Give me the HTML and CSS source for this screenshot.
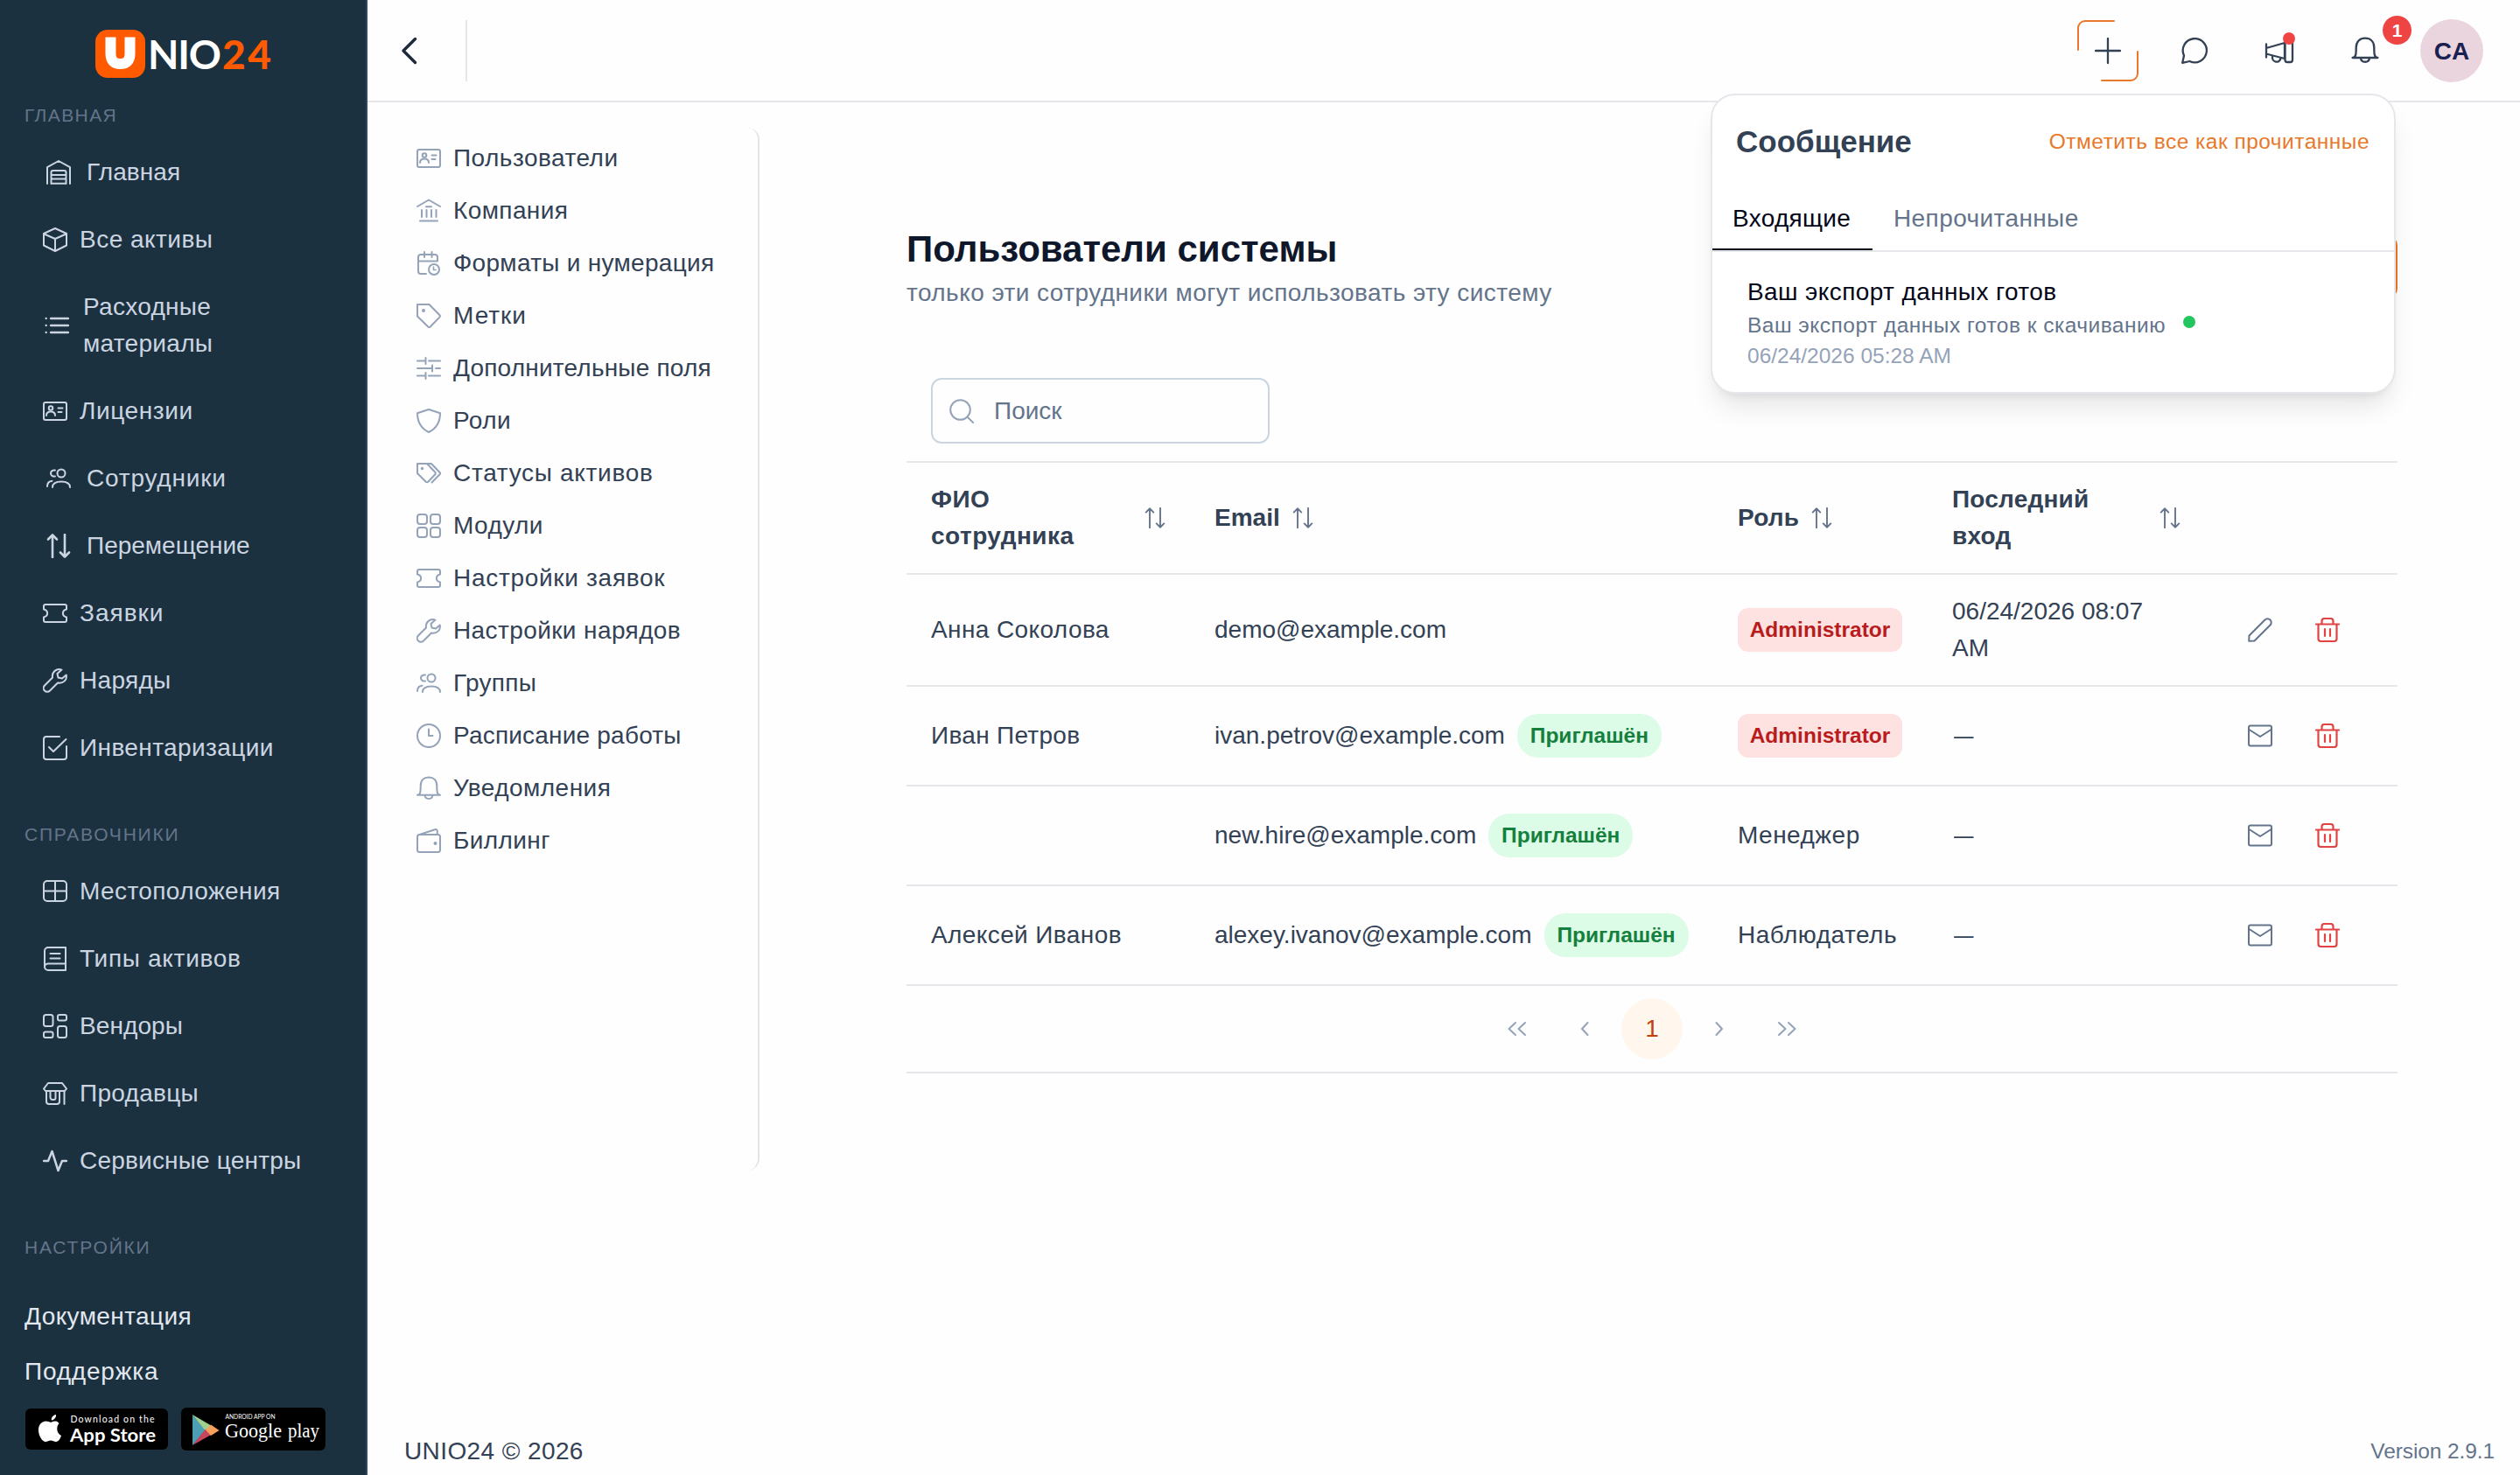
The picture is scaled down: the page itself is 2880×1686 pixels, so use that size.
FILE: index.html
```html
<!DOCTYPE html>
<html lang="ru">
<head>
<meta charset="utf-8">
<title>UNIO24</title>
<link rel="stylesheet" href="styles.css">
</head>
<body>
<svg class="sprite" aria-hidden="true">
  <symbol id="warehouse" viewBox="0 0 28 28"><path d="M1 27V8.200L14 1l13 7.200V27M5.500 27V14a2 2 0 0 1 2-2h13a2 2 0 0 1 2 2v13M5.500 17h17M5.500 21.500h17M6 26.700h16"/></symbol>
  <symbol id="box" viewBox="0 0 28 28"><path d="M14 1 27 7v13.500L14 27 1 20.500V7zM1.500 7.500 14 13l12.500-5.500M14 13v14"/></symbol>
  <symbol id="list" viewBox="0 0 28 28"><path d="M7 6h20M7 14h20M7 22h20M1.600 6h.2M1.600 14h.2M1.600 22h.2" stroke-width="2.300"/></symbol>
  <symbol id="idcard" viewBox="0 0 28 28"><rect x="1" y="4" width="26" height="20" rx="2"/><circle cx="9" cy="10.500" r="2.300"/><path d="M4 19c0-3 2-4.500 5-4.500s5 1.500 5 4.500M17.500 10.500h5M17.500 15h4"/></symbol>
  <symbol id="users" viewBox="0 0 28 28"><circle cx="17" cy="8" r="4.500"/><path d="M7 24c0-4.500 4-6.500 10-6.500s10 2 10 6.500M10 4.500C7.500 4 5 5.500 5 8s2.500 4 5 3.500M1 23c0-4 2-6 5.500-6.300"/></symbol>
  <symbol id="sort" viewBox="0 0 28 28"><path d="M7 27V1.500M2 6.500l5-5 5 5M21 1v25.500M16 21.500l5 5 5-5"/></symbol>
  <symbol id="ticket" viewBox="0 0 28 28"><path d="M3 4h22a2 2 0 0 1 2 2v3.500c-5.500 1.500-5.500 7.500 0 9V22a2 2 0 0 1-2 2H3a2 2 0 0 1-2-2v-3.500c5.500-1.500 5.500-7.500 0-9V6a2 2 0 0 1 2-2z"/></symbol>
  <symbol id="wrench" viewBox="0 0 28 28"><path d="M21.500 1.600c-6-2-11.500 2.400-10.500 8.900L2 19.500a4 4 0 0 0 6 6l9-9c6 1 11-3 9.700-9L22 11.500l-4.500-1L16.500 6z"/></symbol>
  <symbol id="check" viewBox="0 0 28 28"><path d="M19 1H4a3 3 0 0 0-3 3v20a3 3 0 0 0 3 3h20a3 3 0 0 0 3-3V12M7 13l5 5L26.500 4"/></symbol>
  <symbol id="table" viewBox="0 0 28 28"><rect x="1" y="2" width="26" height="23" rx="4"/><path d="M14 2v23M1 13.500h26"/></symbol>
  <symbol id="book" viewBox="0 0 28 28"><path d="M26 1H6a4 4 0 0 0-4 4v18a4 4 0 0 0 4 4h20zM26 19.500H6C4 19.500 2 21 2 23M8.500 8h11M8.500 13.500h11"/></symbol>
  <symbol id="objects" viewBox="0 0 28 28"><rect x="1" y="1" width="10.500" height="13" rx="2.500"/><rect x="17" y="1" width="10" height="6.500" rx="2"/><rect x="1" y="20.500" width="10.500" height="6.500" rx="2"/><rect x="17" y="14" width="10" height="13" rx="2.500"/></symbol>
  <symbol id="shop" viewBox="0 0 28 28"><path d="M6 2h16l5 6.500-2 2.500H3L1 8.500zM4 11v12a3 3 0 0 0 3 3h9a3 3 0 0 0 3-3V11M24.500 11v15M8.500 11v7.500a2.500 2.500 0 0 0 2.500 2.500h1.500a2 2 0 0 0 2-2v-8"/></symbol>
  <symbol id="wave" viewBox="0 0 28 28"><path d="M1 14h5L10.500 3l7 22L22 14h5" stroke-width="2.500"/></symbol>
  <symbol id="bank" viewBox="0 0 28 28"><path d="M1 9 14 1.500 27 9M11 9.200h6M6 13v8M11.500 13v8M17 13v8M22.500 13v8M4 25.500h20"/></symbol>
  <symbol id="calendar" viewBox="0 0 28 28"><path d="M11 26H5a3 3 0 0 1-3-3V7a3 3 0 0 1 3-3h16a3 3 0 0 1 3 3v4M2 11.500h22M9 1v6M17.500 1v6"/><circle cx="20" cy="21" r="6"/><path d="M19.500 18v3.500h2.500" stroke-width="1.600"/></symbol>
  <symbol id="tag" viewBox="0 0 28 28"><path d="M1 1h13.500L26.300 13a2 2 0 0 1 0 2.600L16 26.300a2 2 0 0 1-3 0L1 14.500z"/><circle class="dot" cx="8" cy="8" r="2"/></symbol>
  <symbol id="sliders" viewBox="0 0 28 28"><path d="M1 5.500h9M14 5.500h13M10.500 2v7M1 14h16M22 14h5M18 10.500v7M1 22.500h9M14 22.500h13M10.500 19v7"/></symbol>
  <symbol id="shield" viewBox="0 0 28 28"><path d="M14 1 27 5.200C27 16 22 23 14 27 6 23 1 16 1 5.200z"/></symbol>
  <symbol id="tags" viewBox="0 0 28 28"><path d="M1 3h11l9.500 10a2 2 0 0 1 0 2l-8.500 9a2 2 0 0 1-2 0L1 14zM12 3h5l10 10.500a1 1 0 0 1 0 1.200L17.500 24.500"/><circle class="dot" cx="6.500" cy="8.500" r="1.700"/></symbol>
  <symbol id="grid" viewBox="0 0 28 28"><rect x="1" y="1" width="11" height="11" rx="3"/><rect x="16" y="1" width="11" height="11" rx="3"/><rect x="1" y="16" width="11" height="11" rx="3"/><rect x="16" y="16" width="11" height="11" rx="3"/></symbol>
  <symbol id="clock" viewBox="0 0 28 28"><circle cx="14" cy="14" r="13"/><path d="M14 6.500V14h4.500"/></symbol>
  <symbol id="bell" viewBox="0 0 28 28"><path d="M1 21.700c3.500 0 3.700-4 3.700-10.500C4.700 5 8.500 1.500 14 1.500S23.300 5 23.300 11.200c0 6.500.2 10.500 3.700 10.500zM9.500 22c.5 5.300 8.500 5.300 9 0"/></symbol>
  <symbol id="wallet" viewBox="0 0 28 28"><rect x="1" y="7" width="26" height="20" rx="2.500"/><path d="M5 6.500 21 1.200c2-.5 2.800.3 2.800 2.300v3"/><circle class="dot" cx="21.500" cy="17" r="2"/></symbol>
  <symbol id="search" viewBox="0 0 28 28"><circle cx="12.500" cy="12.500" r="11.300"/><path d="m20.500 20.500 6.500 6.500"/></symbol>
  <symbol id="pencil" viewBox="0 0 28 28"><path d="M1.200 26.800 1.500 20.500 19.500 2.500a4.200 4.200 0 0 1 6 6L7.500 26.500z"/></symbol>
  <symbol id="mail" viewBox="0 0 28 28"><rect x="1" y="2.500" width="26" height="23" rx="2"/><path d="M1.500 7 14 15 26.500 7"/></symbol>
  <symbol id="trash" viewBox="0 0 28 28"><path d="M1 7.500h26M3.500 7.500V24a3 3 0 0 0 3 3h15a3 3 0 0 0 3-3V7.500M7.500 7V4a3 3 0 0 1 3-3h7a3 3 0 0 1 3 3v3M11 13v8M17 13v8"/></symbol>
  <symbol id="plus" viewBox="0 0 30 30"><path d="M15 1v28M1 15h28"/></symbol>
  <symbol id="chat" viewBox="0 0 30 30"><path d="M1.200 28.800 3 20.500A13.600 13.600 0 1 1 9.500 27z"/></symbol>
  <symbol id="megaphone" viewBox="0 0 34 30"><path d="M2 7.500v15M2 12l21-6v18L2 18.500M9 21.500c-1 7 8.500 8.500 9.500 2"/><rect x="23.500" y="2" width="8.500" height="26" rx="2.500"/></symbol>
  <symbol id="left" viewBox="0 0 28 28"><path d="m17.500 7-6.500 7 6.500 7"/></symbol>
  <symbol id="right" viewBox="0 0 28 28"><path d="m10.500 7 6.500 7-6.500 7"/></symbol>
  <symbol id="dleft" viewBox="0 0 28 28"><path d="m12 7-7.500 7 7.500 7M23 7l-7.500 7 7.500 7"/></symbol>
  <symbol id="dright" viewBox="0 0 28 28"><path d="m5 7 7.500 7L5 21M16 7l7.500 7-7.500 7"/></symbol>
</svg>

<div class="app">
  <aside class="sidebar">
    <svg class="logo" width="204" height="60" viewBox="0 0 204 60">
      <rect x="1" y="2" width="57" height="55" rx="14" fill="#ff5a00"/>
      <path d="M18.500 10.500v19c0 8 4 11.500 11 11.500S40.500 37.500 40.500 29.500v-19" fill="none" stroke="#fff" stroke-width="12"/>
      <text class="logo-text" x="61" y="46.500" textLength="84" fill="#fff">NIO</text>
      <text class="logo-text heavy" x="146" y="46.500" textLength="56" fill="#ff5a00">24</text>
    </svg>
    <h6 class="nav-title">ГЛАВНАЯ</h6>
    <nav class="nav">
      <a class="nav-item nav-wide"><svg class="icon"><use href="#warehouse"/></svg><span class="ls-1">Главная</span></a>
      <a class="nav-item"><svg class="icon"><use href="#box"/></svg><span class="ls-5">Все активы</span></a>
      <a class="nav-item nav-mid"><svg class="icon"><use href="#list"/></svg><span class="ls-3">Расходные материалы</span></a>
      <a class="nav-item"><svg class="icon"><use href="#idcard"/></svg><span class="ls-6">Лицензии</span></a>
      <a class="nav-item nav-wide"><svg class="icon"><use href="#users"/></svg><span class="ls-8">Сотрудники</span></a>
      <a class="nav-item nav-wide"><svg class="icon bold"><use href="#sort"/></svg><span>Перемещение</span></a>
      <a class="nav-item"><svg class="icon"><use href="#ticket"/></svg><span class="ls-10">Заявки</span></a>
      <a class="nav-item"><svg class="icon"><use href="#wrench"/></svg><span class="ls-3">Наряды</span></a>
      <a class="nav-item"><svg class="icon"><use href="#check"/></svg><span class="ls-4">Инвентаризации</span></a>
    </nav>
    <h6 class="nav-title looser">СПРАВОЧНИКИ</h6>
    <nav class="nav">
      <a class="nav-item"><svg class="icon"><use href="#table"/></svg><span class="ls-4">Местоположения</span></a>
      <a class="nav-item"><svg class="icon"><use href="#book"/></svg><span class="ls-7">Типы активов</span></a>
      <a class="nav-item"><svg class="icon"><use href="#objects"/></svg><span class="ls-1">Вендоры</span></a>
      <a class="nav-item"><svg class="icon"><use href="#shop"/></svg><span class="ls-3">Продавцы</span></a>
      <a class="nav-item"><svg class="icon"><use href="#wave"/></svg><span class="ls-2">Сервисные центры</span></a>
    </nav>
    <h6 class="nav-title looser">НАСТРОЙКИ</h6>
    <div class="nav-links">
      <a class="ls-4">Документация</a>
      <a class="ls-8">Поддержка</a>
    </div>
    <div class="stores">
      <svg width="164" height="48" viewBox="0 0 164 48">
        <rect width="163" height="47" rx="6"/>
        <path d="M31 13.500c-1-3 2-6 5-6.500.5 3-2 6-5 6.500zM39.500 17c-2.500-3.500-6-2.500-8.500-1.500-2 .7-3-1-6.500-1-5.500 0-9 5-8.500 11 .5 7 5 12.500 8 12.500 2.500 0 3.500-1.500 6-1.500s3.500 1.500 6 1.500c3 0 5-4 6-7-5.500-2.500-6-10.500-2.500-14z" transform="translate(-1)" fill="#fff"/>
        <text class="store-sans" x="51.500" y="15.500" font-size="10.500" textLength="96">Download on the</text>
        <text class="store-sans strong" x="51" y="38" font-size="21" textLength="98" lengthAdjust="spacingAndGlyphs">App Store</text>
      </svg>
      <svg width="166" height="50" viewBox="0 0 166 50">
        <rect width="165" height="49" rx="6"/>
        <path d="M13 8v35l15-17.500z" fill="#4c9fb5"/>
        <path d="M13 8l23 13.500-7 6.500z" fill="#a0d08c"/>
        <path d="M13 43l23-13-8-5.500z" fill="#c8455c"/>
        <path d="M34 19.500l9.500 6.500-9.500 6-6-6.500z" fill="#f5a05b"/>
        <text class="store-sans" x="50.500" y="12.500" font-size="7" textLength="57" lengthAdjust="spacingAndGlyphs">ANDROID APP ON</text>
        <text class="store-serif" x="50" y="34" font-size="23" textLength="65" lengthAdjust="spacingAndGlyphs">Google</text>
        <text class="store-serif" x="122" y="34" font-size="23" textLength="36" lengthAdjust="spacingAndGlyphs">play</text>
      </svg>
    </div>
  </aside>

  <div class="page">
    <header class="topbar">
      <svg class="back" viewBox="0 0 22 32"><path d="M17.500 2.500 4 16l13.500 13.500"/></svg>
      <div class="divider"></div>
      <div class="actions">
        <div class="add">
          <svg class="corners" viewBox="0 0 70 70"><path d="M1 34V9a8 8 0 0 1 8-8h33M69 36v25a8 8 0 0 1-8 8H28"/></svg>
          <svg class="top-icon"><use href="#plus"/></svg>
        </div>
        <svg class="top-icon chat"><use href="#chat"/></svg>
        <div class="news"><svg class="top-icon"><use href="#megaphone"/></svg><i class="red-dot"></i></div>
        <div class="alerts"><svg class="top-icon"><use href="#bell"/></svg><b class="count">1</b></div>
        <div class="avatar">CA</div>
      </div>
      <section class="popup">
        <div class="popup-head"><h3>Сообщение</h3><a class="ls-5">Отметить все как прочитанные</a></div>
        <div class="tabs"><a class="tab active ls-3">Входящие</a><a class="tab ls-4">Непрочитанные</a></div>
        <div class="message">
          <div class="message-title ls-4">Ваш экспорт данных готов</div>
          <div class="message-body ls-5">Ваш экспорт данных готов к скачиванию<i class="green-dot"></i></div>
          <div class="message-time">06/24/2026 05:28 AM</div>
        </div>
      </section>
    </header>

    <main class="main">
      <nav class="settings">
        <a class="ls-5"><svg class="icon"><use href="#idcard"/></svg>Пользователи</a>
        <a class="ls-4"><svg class="icon"><use href="#bank"/></svg>Компания</a>
        <a class="ls-3"><svg class="icon"><use href="#calendar"/></svg>Форматы и нумерация</a>
        <a class="ls-10"><svg class="icon"><use href="#tag"/></svg>Метки</a>
        <a class="ls-2"><svg class="icon"><use href="#sliders"/></svg>Дополнительные поля</a>
        <a class="ls-4"><svg class="icon"><use href="#shield"/></svg>Роли</a>
        <a class="ls-7"><svg class="icon"><use href="#tags"/></svg>Статусы активов</a>
        <a class="ls-4"><svg class="icon"><use href="#grid"/></svg>Модули</a>
        <a class="ls-7"><svg class="icon"><use href="#ticket"/></svg>Настройки заявок</a>
        <a class="ls-4"><svg class="icon"><use href="#wrench"/></svg>Настройки нарядов</a>
        <a class="ls-3"><svg class="icon"><use href="#users"/></svg>Группы</a>
        <a class="ls-2"><svg class="icon"><use href="#clock"/></svg>Расписание работы</a>
        <a class="ls-5"><svg class="icon"><use href="#bell"/></svg>Уведомления</a>
        <a class="ls-4"><svg class="icon"><use href="#wallet"/></svg>Биллинг</a>
      </nav>

      <section class="content">
        <div class="content-head">
          <div>
            <h1>Пользователи системы</h1>
            <p>только эти сотрудники могут использовать эту систему</p>
          </div>
          <div class="add-user"></div>
        </div>
        <div class="toolbar"><div class="search"><svg class="icon"><use href="#search"/></svg><span>Поиск</span></div></div>
        <table class="users">
          <colgroup><col class="c-name"><col class="c-email"><col class="c-role"><col class="c-last"><col></colgroup>
          <thead>
            <tr>
              <th><div class="th spread"><span class="ls-5">ФИО<br>сотрудника</span><svg class="sort"><use href="#sort"/></svg></div></th>
              <th><div class="th"><span>Email</span><svg class="sort"><use href="#sort"/></svg></div></th>
              <th><div class="th"><span class="ls-2">Роль</span><svg class="sort"><use href="#sort"/></svg></div></th>
              <th><div class="th spread"><span class="ls-2">Последний<br>вход</span><svg class="sort"><use href="#sort"/></svg></div></th>
              <th></th>
            </tr>
          </thead>
          <tbody>
            <tr class="tall">
              <td class="ls-4">Анна Соколова</td><td>demo@example.com</td>
              <td><span class="tag">Administrator</span></td>
              <td>06/24/2026 08:07<br>AM</td>
              <td><div class="row-actions"><svg class="icon"><use href="#pencil"/></svg><svg class="icon danger"><use href="#trash"/></svg></div></td>
            </tr>
            <tr>
              <td class="ls-3">Иван Петров</td><td><div class="email">ivan.petrov@example.com<span class="tag invited">Приглашён</span></div></td>
              <td><span class="tag">Administrator</span></td>
              <td><span class="dash">—</span></td>
              <td><div class="row-actions"><svg class="icon"><use href="#mail"/></svg><svg class="icon danger"><use href="#trash"/></svg></div></td>
            </tr>
            <tr>
              <td></td><td><div class="email">new.hire@example.com<span class="tag invited">Приглашён</span></div></td>
              <td class="ls-5">Менеджер</td>
              <td><span class="dash">—</span></td>
              <td><div class="row-actions"><svg class="icon"><use href="#mail"/></svg><svg class="icon danger"><use href="#trash"/></svg></div></td>
            </tr>
            <tr>
              <td class="ls-4">Алексей Иванов</td><td><div class="email">alexey.ivanov@example.com<span class="tag invited">Приглашён</span></div></td>
              <td class="ls-5">Наблюдатель</td>
              <td><span class="dash">—</span></td>
              <td><div class="row-actions"><svg class="icon"><use href="#mail"/></svg><svg class="icon danger"><use href="#trash"/></svg></div></td>
            </tr>
          </tbody>
        </table>
        <div class="pager">
          <a><svg class="icon"><use href="#dleft"/></svg></a>
          <a><svg class="icon"><use href="#left"/></svg></a>
          <a class="current">1</a>
          <a><svg class="icon"><use href="#right"/></svg></a>
          <a><svg class="icon"><use href="#dright"/></svg></a>
        </div>
      </section>
    </main>

    <footer class="footer"><span class="ls-4">UNIO24 © 2026</span><span class="version">Version 2.9.1</span></footer>
  </div>
</div>
</body>
</html>
```
FILE: styles.css
```css
* { box-sizing: border-box; }

body {
  margin: 0;
  background: #fefefe;
  color: #334155;
  font: 28px/42px "Liberation Sans", Arial, sans-serif;
}

h1, h3, h6, p { margin: 0; }

.sprite { position: absolute; width: 0; height: 0; }

svg { display: block; flex: none; }

.icon, .top-icon, .sort {
  width: 28px;
  height: 28px;
  overflow: visible;
  fill: none;
  stroke: currentColor;
  stroke-width: 2;
  stroke-linecap: round;
  stroke-linejoin: round;
}

.icon.bold { stroke-width: 2.6; }
.dot { fill: currentColor; stroke: none; }

/* Letter-spacing steps, in tenths of a pixel */
.ls-1 { letter-spacing: .1px; }
.ls-2 { letter-spacing: .2px; }
.ls-3 { letter-spacing: .3px; }
.ls-4 { letter-spacing: .4px; }
.ls-5 { letter-spacing: .48px; }
.ls-6 { letter-spacing: .6px; }
.ls-7 { letter-spacing: .7px; }
.ls-8 { letter-spacing: .8px; }
.ls-10 { letter-spacing: 1px; }

.app { display: flex; height: 1686px; overflow: hidden; }

/* Sidebar */
.sidebar {
  flex: none;
  width: 420px;
  padding-top: 32px;
  border-right: 2px solid #2f4660;
  background: #1c313f;
  color: #cbd5e1;
}

.logo { margin-left: 108px; }
.logo-text { font: 700 46px Lato, sans-serif; }
.logo-text.heavy { font-weight: 900; }

.nav-title {
  height: 54px;
  padding: 0 28px;
  color: #64748b;
  font-size: 21px;
  font-weight: 400;
  line-height: 53px;
  letter-spacing: 1.4px;
}

.nav-title.looser { letter-spacing: 1.8px; }

.logo + .nav-title { margin-top: 12.500px; }
.nav + .nav-title { margin-top: 33px; }

.nav-item {
  display: flex;
  align-items: center;
  gap: 14px;
  padding: 17.500px 100px 17.500px 49px;
}

.nav-item span { flex: none; }
.nav-mid span { width: 200px; }
.nav-wide .icon { margin: 0 4px; }
.nav-mid .icon { margin: 0 2px; }

.nav-links {
  display: flex;
  flex-direction: column;
  gap: 21px;
  padding: 31px 28px 0;
  color: #e2e8f0;
}

.stores { display: flex; align-items: center; gap: 14px; padding: 20px 29px 0; }
.store-sans { fill: #fff; font-family: Lato, sans-serif; }
.store-sans.strong { font-weight: 700; }
.store-serif { fill: #fff; font-family: "Liberation Serif", serif; }

/* Top bar */
.page { display: flex; flex: 1; flex-direction: column; min-width: 0; }

.topbar {
  position: relative;
  display: flex;
  flex: none;
  align-items: center;
  height: 117px;
  border-bottom: 2px solid #e5e7eb;
  padding: 0 42px 0 37px;
}

.back { width: 22px; height: 32px; fill: none; stroke: #1e293b; stroke-width: 3.4; stroke-linecap: round; stroke-linejoin: round; }
.divider { width: 2px; height: 70px; margin-left: 53px; background: #e5e7eb; }
.actions { display: flex; align-items: center; margin-left: auto; color: #334155; }

.top-icon { width: 30px; height: 30px; stroke-width: 2.3; }

.add { display: grid; place-items: center; width: 70px; height: 70px; }
.add > svg { grid-area: 1 / 1; }
.corners { width: 70px; height: 70px; fill: none; stroke: #e8782a; stroke-width: 2; stroke-linecap: round; }

.chat { margin-left: 49px; }
.news { position: relative; margin-left: 65px; }
.news .top-icon { width: 34px; }
.alerts { position: relative; margin-left: 65px; }
.alerts .top-icon { width: 32px; height: 31px; stroke-width: 2.1; }

.red-dot {
  position: absolute;
  top: -6px;
  right: -1px;
  width: 14px;
  height: 14px;
  border-radius: 50%;
  background: #ef4444;
}

.count {
  position: absolute;
  top: -24px;
  left: 36px;
  width: 33px;
  height: 33px;
  border-radius: 50%;
  background: #ef4444;
  color: #fff;
  font-size: 21px;
  line-height: 33px;
  text-align: center;
}

.avatar {
  width: 72px;
  height: 72px;
  margin-left: 47px;
  border-radius: 50%;
  background: #ead5df;
  color: #1a2150;
  font-weight: 700;
  line-height: 73px;
  text-align: center;
}

/* Notification popup */
.popup {
  position: absolute;
  z-index: 2;
  top: 107px;
  right: 142px;
  width: 783px;
  height: 343px;
  border: 2px solid #e5e7eb;
  border-radius: 28px;
  background: #fff;
  box-shadow: 0 20px 30px -6px rgba(0, 0, 0, .1), 0 8px 12px -8px rgba(0, 0, 0, .1);
}

.popup-head { display: flex; align-items: center; justify-content: space-between; height: 106px; padding: 0 28px 0 27px; }
.popup-head h3 { font-size: 35px; }
.popup-head a { color: #e8782a; font-size: 24.500px; }

.tabs { display: flex; height: 73px; border-bottom: 2px solid #e5e7eb; }
.tab { height: 71px; padding: 14px 24px 14px 23px; color: #64748b; }
.tab + .tab { padding-left: 24px; }
.tab.active { width: 183px; border-bottom: 2px solid #020617; color: #020617; }

.message { padding: 25px 40px; }
.message-title { height: 41px; color: #020617; }
.message-body, .message-time { display: flex; height: 35px; color: #64748b; font-size: 24.500px; line-height: 35px; }
.message-time { color: #94a3b8; }
.green-dot { width: 14px; height: 14px; margin: 7px 0 0 20px; border-radius: 50%; background: #22c55e; }

/* Settings navigation */
.main { display: flex; flex: 1; align-items: flex-start; padding-top: 29px; }

.settings {
  flex: none;
  width: 448px;
  height: 1192px;
  padding: 5px 0 0 56px;
  border-right: 2px solid #e2e4e8;
  border-radius: 14px;
}

.settings a { display: flex; align-items: center; gap: 14px; height: 60px; }
.settings .icon { color: #94a3b8; }

/* Users table */
.content { width: 1704px; margin: 111px 0 0 168px; }

.content-head { display: flex; justify-content: space-between; height: 149px; }
.content-head h1 { color: #0f172a; font-size: 42px; line-height: 56px; }
.content-head p { height: 42px; padding-top: 1px; color: #64748b; letter-spacing: .44px; }
.add-user { width: 300px; height: 70px; margin-top: 13px; border: 2px solid #e8782a; border-radius: 10px; }

.toolbar { height: 123px; padding: 26px 28px; border-bottom: 2px solid #e5e7eb; }

.search {
  display: flex;
  align-items: center;
  gap: 23px;
  width: 387px;
  height: 75px;
  padding: 0 19px;
  border: 2px solid #cbd5e1;
  border-radius: 12px;
  color: #64748b;
}

.search .icon { color: #94a3b8; }

.users { width: 100%; border-collapse: separate; border-spacing: 0; table-layout: fixed; }
.c-name { width: 324px; }
.c-email { width: 598px; }
.c-role { width: 245px; }
.c-last { width: 317px; }

.users th, .users td {
  height: 114px;
  padding: 0 28px;
  border-bottom: 2px solid #e5e7eb;
  text-align: left;
  vertical-align: middle;
}

.users th, .users .tall td { height: 128px; }
.th { display: flex; align-items: center; gap: 14px; line-height: 42px; }
.spread { justify-content: space-between; }
.sort { width: 24px; height: 24px; color: #64748b; stroke-width: 2.2; }
.email { display: flex; align-items: center; gap: 14px; white-space: nowrap; }
.dash { display: inline-block; margin-left: 2px; transform: scaleX(.8); transform-origin: left; }

.tag {
  display: block;
  width: 188px;
  height: 50px;
  border-radius: 12px;
  background: #fee2e2;
  color: #b91c1c;
  font-size: 24.500px;
  font-weight: 700;
  line-height: 50px;
  text-align: center;
}

.tag.invited { width: 165px; border-radius: 24px; background: #dcfce7; color: #15803d; }

.users .row-actions { display: flex; gap: 49px; margin-left: -7px; padding-left: 28px; color: #64748b; }
.danger { color: #e24444; stroke-width: 2.2; }

.pager {
  display: flex;
  align-items: center;
  justify-content: center;
  gap: 7px;
  height: 100px;
  border-bottom: 2px solid #e5e7eb;
  color: #94a3b8;
}

.pager a { display: flex; align-items: center; justify-content: center; width: 70px; height: 70px; border-radius: 50%; }
.pager .current { background: #fff7ed; color: #c2410c; }

/* Footer */
.footer { display: flex; flex: none; align-items: center; justify-content: space-between; height: 54px; padding: 0 29px 0 42px; }
.version { color: #64748b; font-size: 24.500px; letter-spacing: -.1px; }
```
